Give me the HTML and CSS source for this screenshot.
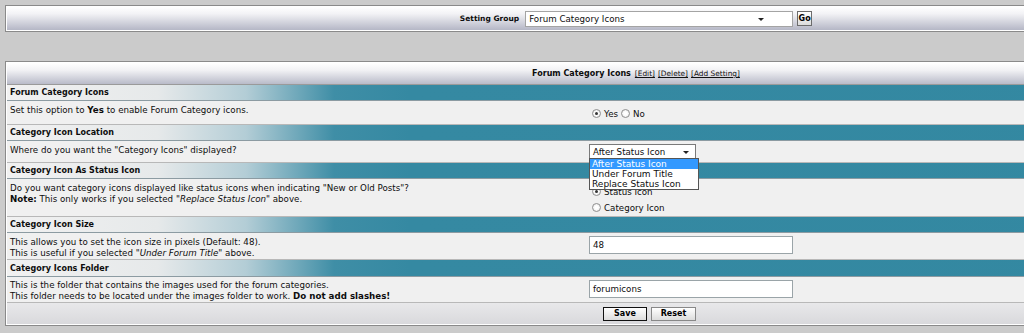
FILE: index.html
```html
<!DOCTYPE html>
<html lang="en">
<head>
  <meta charset="UTF-8" />
  <title>Settings - Forum Category Icons</title>
  <link rel="stylesheet" href="styles.css">
</head>
<body>

<div class="page">

  <!-- Group picker -->
  <div class="box">
    <div class="bar">
      <b>Setting Group</b>
      <span class="select wide">Forum Category Icons<span class="arrow"></span></span>
      <span class="btn small">Go</span>
    </div>
  </div>

  <!-- Settings list -->
  <div class="box settings">
    <div class="title">
      <b>Forum Category Icons</b>
      <a href="#">[Edit]</a> <a href="#">[Delete]</a> <a href="#">[Add Setting]</a>
    </div>

    <div class="section">Forum Category Icons</div>
    <div class="opt h24">
      <div class="desc">Set this option to <b>Yes</b> to enable Forum Category icons.</div>
      <div class="ctrl pad8">
        <span class="radio on"></span> Yes <span class="radio"></span> No
      </div>
    </div>

    <div class="section">Category Icon Location</div>
    <div class="opt h22">
      <div class="desc">Where do you want the "Category Icons" displayed?</div>
      <div class="ctrl pad3">
        <span class="select short">After Status Icon<span class="arrow"></span>
          <span class="list">
            <span class="item hl">After Status Icon</span>
            <span class="item">Under Forum Title</span>
            <span class="item">Replace Status Icon</span>
          </span>
        </span>
      </div>
    </div>

    <div class="section">Category Icon As Status Icon</div>
    <div class="opt h38">
      <div class="desc">
        Do you want category icons displayed like status icons when indicating "New or Old Posts"?<br>
        <b>Note:</b> This only works if you selected <i>"Replace Status Icon"</i> above.
      </div>
      <div class="ctrl pad7 stack">
        <span><span class="radio on"></span> Status Icon</span>
        <span><span class="radio"></span> Category Icon</span>
      </div>
    </div>

    <div class="section">Category Icon Size</div>
    <div class="opt h27">
      <div class="desc">
        This allows you to set the icon size in pixels (Default: 48).<br>
        This is useful if you selected <i>"Under Forum Title"</i> above.
      </div>
      <div class="ctrl pad4"><span class="field">48</span></div>
    </div>

    <div class="section tall">Category Icons Folder</div>
    <div class="opt h26">
      <div class="desc top3">
        This is the folder that contains the images used for the forum categories.<br>
        This folder needs to be located under the images folder to work. <b>Do not add slashes!</b>
      </div>
      <div class="ctrl pad4"><span class="field">forumicons</span></div>
    </div>

    <div class="foot">
      <span class="btn default">Save</span>
      <span class="btn">Reset</span>
    </div>
  </div>

</div>

</body>
</html>
```

FILE: styles.css
```css
body {
  margin: 0;
  background: #cbcbcb;
  color: #0d0d0d;
  font-family: "DejaVu Sans", Verdana, sans-serif;
  font-size: 8.7px;
  overflow: hidden;
}

.page {
  padding: 5px 0 0 5px;
  width: 1262px;
}

.box {
  border: 1px solid #8a8a8a;
  box-shadow: inset 0 0 0 1px #ffffff;
  padding: 1px;
  background: #f0f0f0;
}

.bar {
  height: 23px;
  display: flex;
  align-items: center;
  justify-content: center;
  gap: 4px;
  background: linear-gradient(#ffffff 0%, #f2f2f5 30%, #b5b7c6 100%);
}

.bar b {
  font-size: 7.5px;
  margin-right: 2px;
}

.select {
  position: relative;
  display: inline-flex;
  align-items: center;
  box-sizing: border-box;
  background: #fff;
  border: 1px solid #a4a4a4;
  padding-left: 3px;
}

.select.wide {
  width: 268px;
  height: 16px;
}

.select.short {
  width: 107px;
  height: 15px;
  border-color: #7a7a7a;
}

.arrow {
  position: absolute;
  right: 6px;
  top: 50%;
  margin-top: -1px;
  border-left: 3px solid transparent;
  border-right: 3px solid transparent;
  border-top: 3px solid #222;
}

.select.wide .arrow {
  right: 28px;
}

.list {
  position: absolute;
  left: -1px;
  top: 13px;
  width: 108px;
  display: flex;
  flex-direction: column;
  background: #fff;
  border: 1px solid #555;
  z-index: 2;
}

.item {
  height: 10px;
  line-height: 10px;
  padding-left: 2px;
  font-size: 9px;
}

.item.hl {
  background: #3399ff;
  color: #fff;
}

.btn {
  display: inline-flex;
  align-items: center;
  justify-content: center;
  box-sizing: border-box;
  height: 14px;
  padding: 0 2px;
  background: linear-gradient(#ffffff, #dcdcdc);
  border: 1px solid #6c6c6c;
  font-size: 8px;
  font-weight: bold;
  color: #000;
}

.btn.small {
  height: 15px;
  width: 15px;
}

.settings {
  margin-top: 29px;
}

.title {
  height: 21px;
  border-bottom: 1px solid #9a9a9a;
  display: flex;
  align-items: center;
  justify-content: center;
  gap: 3px;
  background: linear-gradient(#ffffff 0%, #f1f1f4 35%, #b9bbc9 100%);
}

.title b {
  font-size: 8px;
  margin-right: 1px;
}

.title a {
  font-size: 7.4px;
  color: #111;
}

.section {
  height: 15px;
  border-bottom: 1px solid #8c9ba2;
  padding-left: 3px;
  display: flex;
  align-items: center;
  font-size: 8px;
  font-weight: bold;
  background: linear-gradient(to right, #f1f1f1 0%, #e6e9ea 12%, #b3cdd6 19%, #3f8ea6 26%, #3589a2 32%, #3388a1 100%);
}

.section.tall {
  height: 16px;
}

.opt {
  display: flex;
  box-sizing: border-box;
  border-bottom: 1px solid #b8b8b8;
  background: #f0f0f0;
}

.h22 { height: 22px; }
.h24 { height: 24px; }
.h26 { height: 26px; }
.h27 { height: 27px; }
.h38 { height: 38px; }

.desc {
  width: 579px;
  box-sizing: border-box;
  padding: 4px 0 0 3px;
  line-height: 10.5px;
}

.desc.top3 {
  padding-top: 3px;
}

.ctrl {
  padding-left: 3px;
  display: flex;
  align-items: flex-start;
  gap: 3px;
}

.pad3 { padding-top: 3px; }
.pad4 { padding-top: 3px; }
.pad7 { padding-top: 7px; }
.pad8 { padding-top: 7px; padding-left: 6px; }

.ctrl.stack {
  flex-direction: column;
  gap: 5px;
  padding-left: 6px;
}

.ctrl.stack > span {
  display: flex;
  align-items: center;
  gap: 3px;
  height: 11px;
}

.pad8 {
  align-items: center;
  height: 11px;
}

.radio {
  display: inline-block;
  width: 9px;
  height: 9px;
  box-sizing: border-box;
  border-radius: 50%;
  border: 1px solid #8f8f8f;
  background: radial-gradient(#ffffff 30%, #e2e2e2 100%);
  position: relative;
}

.radio.on::after {
  content: "";
  position: absolute;
  left: 2px;
  top: 2px;
  width: 3px;
  height: 3px;
  border-radius: 50%;
  background: #333;
}

.field {
  display: flex;
  align-items: center;
  box-sizing: border-box;
  width: 204px;
  height: 18px;
  padding-left: 3px;
  background: #fff;
  border: 1px solid #9aa4a8;
}

.foot {
  height: 21px;
  display: flex;
  align-items: center;
  gap: 4px;
  padding-left: 596px;
  background: linear-gradient(#e8e8ea, #d9d9dc);
}

.foot .btn {
  width: 45px;
  height: 14px;
  border-color: #888;
}

.foot .btn.default {
  width: 44px;
  border: 1px solid #111;
}
```
